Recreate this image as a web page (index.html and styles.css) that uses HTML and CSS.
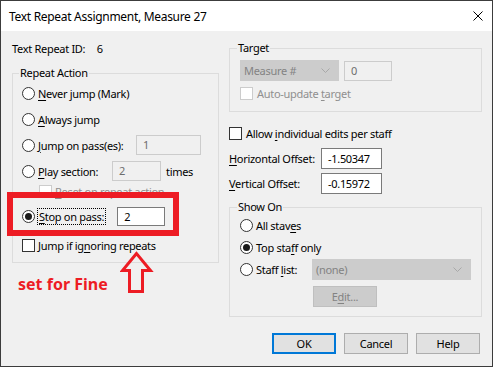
FILE: index.html
```html
<!DOCTYPE html>
<html lang="en">
  <head>
    <meta charset="UTF-8" />
    <title>Text Repeat Assignment</title>
    <link rel="stylesheet" href="styles.css">
  </head>
  <body>
    <div class="dialog">
      <div class="titlebar">
        <span>Text Repeat Assignment, Measure 27</span>
        <svg class="close" width="10" height="10" viewBox="0 0 10 10">
          <path d="M0.5 0.5 L9.5 9.5 M9.5 0.5 L0.5 9.5" stroke="#000" stroke-width="1" fill="none" />
        </svg>
      </div>

      <div class="content">
        <div class="columns">
          <div class="col-left">
            <div class="id-row">Text Repeat ID: <span class="id-val">6</span></div>

            <fieldset class="group repeat">
              <legend>Repeat Action</legend>
              <div class="row r-never">
                <span class="radio"></span>
                <span class="lbl"><u>N</u>ever jump (Mark)</span>
              </div>
              <div class="row r-always">
                <span class="radio"></span>
                <span class="lbl"><u>A</u>lways jump</span>
              </div>
              <div class="row r-jump">
                <span class="radio"></span>
                <span class="lbl w-jump"><u>J</u>ump on pass(es):</span>
                <span class="field disabled w-pass">1</span>
              </div>
              <div class="row r-play">
                <span class="radio"></span>
                <span class="lbl w-play"><u>P</u>lay section:</span>
                <span class="field disabled w-times">2</span>
                <span class="after">times</span>
              </div>
              <div class="row r-reset">
                <span class="check disabled"></span>
                <span class="lbl muted"><u>R</u>eset on repeat action</span>
              </div>
              <div class="row r-stop">
                <span class="radio on"></span>
                <span class="lbl focus"><u>S</u>top on pass:</span>
                <span class="field w-stop">2</span>
              </div>
              <div class="row r-jumpif">
                <span class="check"></span>
                <span class="lbl">Jump if ig<u>n</u>oring repeats</span>
              </div>
            </fieldset>
          </div>

          <div class="col-right">
            <fieldset class="group target">
              <legend>Target</legend>
              <div class="row">
                <span class="combo disabled w-measure">
                  Measure #
                  <svg width="9" height="5" viewBox="0 0 9 5"><polyline points="0.5,0.5 4.5,4.5 8.5,0.5" fill="none" stroke="#a8a8a8" /></svg>
                </span>
                <span class="field disabled w-zero">0</span>
              </div>
              <div class="row r-auto">
                <span class="check disabled"></span>
                <span class="lbl muted">Auto-update <u>t</u>arget</span>
              </div>
            </fieldset>

            <div class="row r-allow">
              <span class="check"></span>
              <span class="lbl">Allow <u>i</u>ndividual edits per staff</span>
            </div>
            <div class="row r-offset">
              <span class="off-lbl"><u>H</u>orizontal Offset:</span>
              <span class="field w-offset">-1.50347</span>
            </div>
            <div class="row r-offset r-vert">
              <span class="off-lbl"><u>V</u>ertical Offset:</span>
              <span class="field w-offset">-0.15972</span>
            </div>

            <fieldset class="group show-on">
              <legend>Show On</legend>
              <div class="row r-show">
                <span class="radio"></span>
                <span class="lbl">All stav<u>e</u>s</span>
              </div>
              <div class="row r-show">
                <span class="radio on"></span>
                <span class="lbl">Top sta<u>f</u>f only</span>
              </div>
              <div class="row r-show">
                <span class="radio"></span>
                <span class="lbl w-staff">Staff <u>l</u>ist:</span>
                <span class="combo disabled w-list">
                  (none)
                  <svg width="9" height="5" viewBox="0 0 9 5"><polyline points="0.5,0.5 4.5,4.5 8.5,0.5" fill="none" stroke="#a8a8a8" /></svg>
                </span>
              </div>
              <div class="edit-row">
                <span class="btn disabled">E<u>d</u>it...</span>
              </div>
            </fieldset>
          </div>
        </div>

        <div class="buttons">
          <span class="btn default">OK</span>
          <span class="btn">Cancel</span>
          <span class="btn">Help</span>
        </div>
      </div>

      <!-- annotation drawn over the dialog -->
      <div class="mark-box"></div>
      <div class="note">set for Fine</div>
      <svg class="note-arrow" width="36" height="48" viewBox="0 0 36 48">
        <polygon points="16.5,4.5 2.5,21.5 9.5,21.5 9.5,42.5 22.5,42.5 22.5,21.5 30.5,21.5" fill="none" stroke="#ed1c24" stroke-width="3" />
      </svg>
    </div>
  </body>
</html>
```

FILE: styles.css
```css
* {
  box-sizing: border-box;
}

body {
  margin: 0;
  background: #fff;
  color: #000;
  font-family: "Segoe UI", "Noto Sans", sans-serif;
  font-size: 11px;
  letter-spacing: -0.3px;
}

.dialog {
  position: relative;
  width: 493px;
  height: 367px;
  border: 1px solid #3c3c3c;
  background: #f0f0f0;
  display: flex;
  flex-direction: column;
}

.titlebar {
  height: 30px;
  background: #fff;
  display: flex;
  align-items: center;
  justify-content: space-between;
  padding: 0 9px 0 8px;
  font-size: 12px;
}

.content {
  padding: 10px 10px 0 11px;
}

.columns {
  display: flex;
  gap: 10px;
  align-items: flex-start;
}

.col-left {
  width: 207px;
}

.col-right {
  width: 253px;
}

.id-row {
  height: 16px;
  line-height: 16px;
  margin-bottom: 9px;
}

.id-val {
  margin-left: 9px;
}

.group {
  margin: 0;
  border: 1px solid #dcdcdc;
  min-width: 0;
}

.group legend {
  padding: 0 1px;
  margin-left: -3px;
  line-height: 14px;
}

.row {
  display: flex;
  align-items: center;
}

u {
  text-decoration-thickness: 1px;
  text-underline-offset: 2px;
}

/* repeat action */
.repeat {
  padding: 0 0 6px 9px;
}

.r-never,
.r-always,
.r-jump {
  height: 26px;
}

.r-play {
  height: 26px;
}

.r-reset {
  height: 14px;
  padding-left: 17px;
}

.r-stop {
  height: 36px;
}

.r-jumpif {
  height: 22px;
}

.radio {
  flex: none;
  width: 13px;
  height: 13px;
  border: 1px solid #333;
  border-radius: 50%;
  background: #fff;
  display: flex;
  align-items: center;
  justify-content: center;
}

.radio.on::after {
  content: "";
  width: 7px;
  height: 7px;
  border-radius: 50%;
  background: #1a1a1a;
}

.check {
  flex: none;
  width: 13px;
  height: 13px;
  border: 1px solid #333;
  background: #fff;
}

.check.disabled {
  border-color: #cccccc;
}

.lbl {
  margin-left: 3px;
  white-space: nowrap;
}

.muted {
  color: #8f8f8f;
}

.w-jump {
  width: 98px;
}

.w-play {
  width: 74px;
}

.focus {
  margin-left: 2px;
  padding: 0 1px;
  border: 1px dotted #000;
  margin-right: 11px;
}

.field {
  height: 20px;
  line-height: 18px;
  padding-left: 6px;
  border: 1px solid #7a7a7a;
  background: #fff;
}

.field.disabled {
  border-color: #cccccc;
  background: #f0f0f0;
  color: #6d6d6d;
}

.w-pass {
  width: 65px;
}

.w-times {
  width: 49px;
}

.after {
  margin-left: 5px;
}

.w-stop {
  width: 48px;
  height: 19px;
  line-height: 17px;
}

/* right column */
.target {
  padding: 5px 0 9px 10px;
}

.combo {
  height: 21px;
  padding: 0 8px 0 3px;
  display: flex;
  align-items: center;
  justify-content: space-between;
  border: 1px solid #cccccc;
  background: #cccccc;
  color: #838383;
}

.w-measure {
  width: 99px;
}

.w-zero {
  width: 48px;
  margin-left: 5px;
}

.r-auto {
  height: 18px;
  margin-top: 3px;
}

.r-auto .lbl {
  margin-left: 4px;
}

.r-allow {
  height: 18px;
  margin-top: 12px;
}

.r-allow .lbl {
  margin-left: 4px;
}

.r-offset {
  height: 21px;
  margin-top: 6px;
}

.r-vert {
  margin-top: 4px;
}

.off-lbl {
  width: 92px;
  white-space: nowrap;
}

.w-offset {
  width: 61px;
  height: 21px;
  line-height: 19px;
}

.show-on {
  margin-top: 6px;
  padding: 0 0 9px 10px;
}

.r-show {
  height: 22px;
}

.w-staff {
  width: 56px;
}

.w-list {
  width: 159px;
}

.edit-row {
  margin-top: 6px;
  padding-left: 73px;
  display: flex;
}

.btn {
  width: 64px;
  height: 21px;
  display: flex;
  align-items: center;
  justify-content: center;
  border: 1px solid #adadad;
  background: #e1e1e1;
}

.btn.default {
  border-color: #0078d7;
  box-shadow: inset 0 0 0 1px #0078d7;
}

.btn.disabled {
  border-color: #bfbfbf;
  background: #cccccc;
  color: #838383;
}

.buttons {
  margin-top: 16px;
  padding-right: 2px;
  display: flex;
  justify-content: flex-end;
  gap: 8px;
}

/* annotation */
.mark-box {
  position: absolute;
  left: 6px;
  top: 191px;
  width: 172px;
  height: 44px;
  border: 6px solid #ed1c24;
}

.note {
  position: absolute;
  left: 17px;
  top: 273px;
  line-height: 20px;
  font-size: 16px;
  font-weight: bold;
  letter-spacing: 0;
  color: #ed1c24;
}

.note-arrow {
  position: absolute;
  left: 119px;
  top: 248px;
}
```
